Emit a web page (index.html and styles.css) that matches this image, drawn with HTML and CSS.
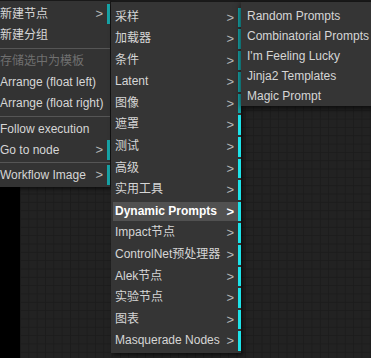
FILE: index.html
```html
<!DOCTYPE html>
<html lang="en">
<head>
    <meta charset="UTF-8">
    <title>Context menu</title>
    <link rel="stylesheet" href="styles.css">
</head>
<body>

    <div class="workspace">
        <div class="sidebar"></div>
        <div class="canvas"></div>
    </div>

    <!-- main context menu -->
    <div class="menu menu-main">
        <div class="item sub shaded">新建节点<span class="arrow">&gt;</span></div>
        <div class="item">新建分组</div>
        <div class="sep"></div>
        <div class="item disabled">存储选中为模板</div>
        <div class="item">Arrange (float left)</div>
        <div class="item">Arrange (float right)</div>
        <div class="sep"></div>
        <div class="item">Follow execution</div>
        <div class="item sub shaded">Go to node<span class="arrow">&gt;</span></div>
        <div class="sep"></div>
        <div class="item sub shaded">Workflow Image<span class="arrow">&gt;</span></div>
    </div>

    <!-- node categories -->
    <div class="menu menu-nodes">
        <div class="item sub shaded">采样<span class="arrow">&gt;</span></div>
        <div class="item sub shaded">加载器<span class="arrow">&gt;</span></div>
        <div class="item sub shaded">条件<span class="arrow">&gt;</span></div>
        <div class="item sub shaded">Latent<span class="arrow">&gt;</span></div>
        <div class="item sub shaded">图像<span class="arrow">&gt;</span></div>
        <div class="item sub">遮罩<span class="arrow">&gt;</span></div>
        <div class="item sub">测试<span class="arrow">&gt;</span></div>
        <div class="item sub">高级<span class="arrow">&gt;</span></div>
        <div class="item sub">实用工具<span class="arrow">&gt;</span></div>
        <div class="item sub active">Dynamic Prompts<span class="arrow">&gt;</span></div>
        <div class="item sub">Impact节点<span class="arrow">&gt;</span></div>
        <div class="item sub">ControlNet预处理器<span class="arrow">&gt;</span></div>
        <div class="item sub">Alek节点<span class="arrow">&gt;</span></div>
        <div class="item sub">实验节点<span class="arrow">&gt;</span></div>
        <div class="item sub">图表<span class="arrow">&gt;</span></div>
        <div class="item sub">Masquerade Nodes<span class="arrow">&gt;</span></div>
    </div>

    <!-- Dynamic Prompts nodes -->
    <div class="menu menu-leaf">
        <div class="item">Random Prompts</div>
        <div class="item">Combinatorial Prompts</div>
        <div class="item">I'm Feeling Lucky</div>
        <div class="item">Jinja2 Templates</div>
        <div class="item">Magic Prompt</div>
    </div>

</body>
</html>
```

FILE: styles.css
```css
* {
    margin: 0;
    padding: 0;
    box-sizing: border-box;
}
body {
    width: 371px;
    height: 358px;
    overflow: hidden;
    position: relative;
    background: #1b1b1b;
    font-family: "Liberation Sans", "Noto Sans CJK SC", sans-serif;
    font-size: 12px;
    color: #d6d6d6;
}
.workspace {
    display: flex;
    height: 100%;
    padding-top: 2px;
}
.sidebar {
    width: 20px;
    background: #000;
}
.canvas {
    flex: 1;
    background-color: #222;
    background-image:
        linear-gradient(to right, #1c1c1c 1px, transparent 1px),
        linear-gradient(to bottom, #1c1c1c 1px, transparent 1px);
    background-size: 8.33px 8.33px;
}

/* menus */
.menu {
    position: absolute;
    background: #353535;
    box-shadow: 2px 2px 4px rgba(0, 0, 0, 0.6);
}
.item {
    position: relative;
    white-space: nowrap;
    line-height: 20px;
    height: 21px;
}
.item .arrow {
    position: absolute;
    right: 4px;
    top: 0;
    color: #b8b8b8;
    font-size: 13px;
}
.sub {
    border-right: 3px solid #1de3e9;
}
.shaded {
    border-right-color: #17a3a6;
}
.disabled {
    color: #707070;
}
.sep {
    height: 1px;
    background: #555;
    margin: 2px 0 2px;
}

.menu-main {
    left: -4px;
    top: 1px;
    width: 114px;
    padding: 3px 0 1px 4px;
    background: #333;
}
.menu-main .sub {
    height: 20px;
    margin-bottom: 1px;
}

.menu-nodes {
    left: 111px;
    top: 2px;
    width: 130px;
    padding: 5.5px 0 0 2px;
    height: 351px;
}
.menu-nodes .item {
    height: 19.6px;
    margin-bottom: 2px;
    padding: 0 0 0 2px;
    line-height: 19px;
}
.menu-nodes .active {
    background: #515151;
    font-weight: bold;
    color: #fff;
}
.menu-nodes .active .arrow {
    color: #fff;
}

.menu-leaf {
    left: 241px;
    top: 2px;
    width: 140px;
    padding: 4px 0 0 6px;
    height: 104px;
    box-shadow: 0 2px 6px rgba(0, 0, 0, 0.7);
}
.menu-leaf .item {
    height: 20px;
}
```
